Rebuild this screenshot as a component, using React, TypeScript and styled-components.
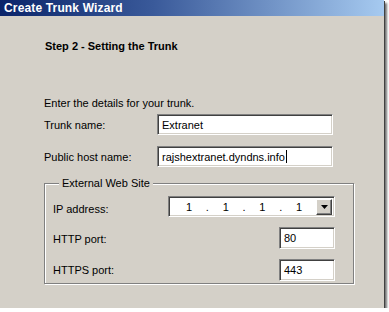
import { FC } from "react";
import styled, { createGlobalStyle } from "styled-components";

const GlobalStyle = createGlobalStyle`
  html, body {
    margin: 0;
    padding: 0;
    background: #ffffff;
  }
  body {
    font-family: "Liberation Sans", "DejaVu Sans", sans-serif;
    font-size: 11px;
    color: #000;
  }
`;

const Window = styled.div`
  width: 384px;
  height: 308px;
  background: #d4d0c8;
  box-shadow: 1px 1px 0 #404040, 3px 3px 2px rgba(0, 0, 0, 0.55);
  display: flex;
  flex-direction: column;
  overflow: hidden;
`;

const TitleBar = styled.div`
  height: 16px;
  flex: none;
  background: linear-gradient(to right, #0a246a 0%, #3a5a9a 40%, #a6caf0 100%);
  color: #fff;
  font-weight: bold;
  font-size: 12px;
  line-height: 16px;
  padding-left: 4px;
  letter-spacing: 0.15px;
`;

const Body = styled.div`
  padding: 23px 0 0 44px;
`;

const Heading = styled.div`
  font-weight: bold;
  line-height: 14px;
  margin-left: 1px;
`;

const Intro = styled.div`
  margin-top: 43px;
  line-height: 14px;
`;

const FormGrid = styled.div`
  margin-top: 4px;
  display: grid;
  grid-template-columns: 113px 176px;
  row-gap: 11px;
  align-items: center;
`;

const Label = styled.div`
  line-height: 14px;
`;

const TextBox = styled.div<{ $w?: number; $h?: number }>`
  box-sizing: border-box;
  width: ${(p) => (p.$w ? `${p.$w}px` : "100%")};
  height: ${(p) => p.$h ?? 21}px;
  justify-self: end;
  background: #fff;
  border-top: 1px solid #808080;
  border-left: 1px solid #808080;
  border-right: 1px solid #fff;
  border-bottom: 1px solid #fff;
  box-shadow: inset 1px 1px 0 #404040, inset -1px -1px 0 #d4d0c8;
  padding: 0 4px;
  display: flex;
  align-items: center;
  white-space: nowrap;
`;

const Caret = styled.span`
  display: inline-block;
  width: 1px;
  height: 13px;
  background: #000;
  margin-left: 1px;
`;

const GroupBox = styled.fieldset`
  margin: 9px 0 0 0;
  width: 310px;
  height: 108px;
  box-sizing: border-box;
  border: none;
  box-shadow: inset 1px 1px 0 #808080, inset -1px -1px 0 #808080,
    inset 2px 2px 0 #fff, 1px 1px 0 #fff;
  padding: 6px 19px 0 9px;
`;

const Legend = styled.legend`
  padding: 0 3px;
  margin-left: 6px;
  line-height: 14px;
  background: #d4d0c8;
`;

const GroupGrid = styled.div`
  display: grid;
  grid-template-columns: 1fr auto;
  align-items: center;
  row-gap: 10px;
`;

const IpBox = styled(TextBox)`
  width: 167px;
  height: 21px;
  padding: 0 2px 0 0;
  justify-content: space-between;
`;

const IpParts = styled.div`
  display: flex;
  padding-left: 11px;
`;

const Octet = styled.span`
  width: 18px;
  text-align: center;
`;

const Dot = styled.span`
  width: 18.7px;
  text-align: center;
`;

const DropButton = styled.div`
  width: 16px;
  height: 16px;
  box-sizing: border-box;
  background: #d4d0c8;
  border-top: 1px solid #fff;
  border-left: 1px solid #fff;
  border-right: 1px solid #404040;
  border-bottom: 1px solid #404040;
  box-shadow: inset -1px -1px 0 #808080;
  display: flex;
  align-items: center;
  justify-content: center;
`;

const GroupLabel = styled(Label)<{ $shift?: number }>`
  padding-top: ${(p) => p.$shift ?? 0}px;
`;

const App: FC = () => {
  return (
    <>
      <GlobalStyle />
      <Window>
        <TitleBar>Create Trunk Wizard</TitleBar>
        <Body>
          <Heading>Step 2 - Setting the Trunk</Heading>
          <Intro>Enter the details for your trunk.</Intro>
          <FormGrid>
            <Label>Trunk name:</Label>
            <TextBox>Extranet</TextBox>
            <Label>Public host name:</Label>
            <TextBox>
              rajshextranet.dyndns.info
              <Caret />
            </TextBox>
          </FormGrid>
          <GroupBox>
            <Legend>External Web Site</Legend>
            <GroupGrid>
              <GroupLabel $shift={4}>IP address:</GroupLabel>
              <IpBox>
                <IpParts>
                  <Octet>1</Octet>
                  <Dot>.</Dot>
                  <Octet>1</Octet>
                  <Dot>.</Dot>
                  <Octet>1</Octet>
                  <Dot>.</Dot>
                  <Octet>1</Octet>
                </IpParts>
                <DropButton>
                  <svg width="7" height="4" viewBox="0 0 7 4">
                    <path d="M0 0h7L3.5 4z" fill="#000" />
                  </svg>
                </DropButton>
              </IpBox>
              <GroupLabel $shift={2}>HTTP port:</GroupLabel>
              <TextBox $w={56} $h={22}>80</TextBox>
              <GroupLabel>HTTPS port:</GroupLabel>
              <TextBox $w={56} $h={22}>443</TextBox>
            </GroupGrid>
          </GroupBox>
        </Body>
      </Window>
    </>
  );
};

export default App;
